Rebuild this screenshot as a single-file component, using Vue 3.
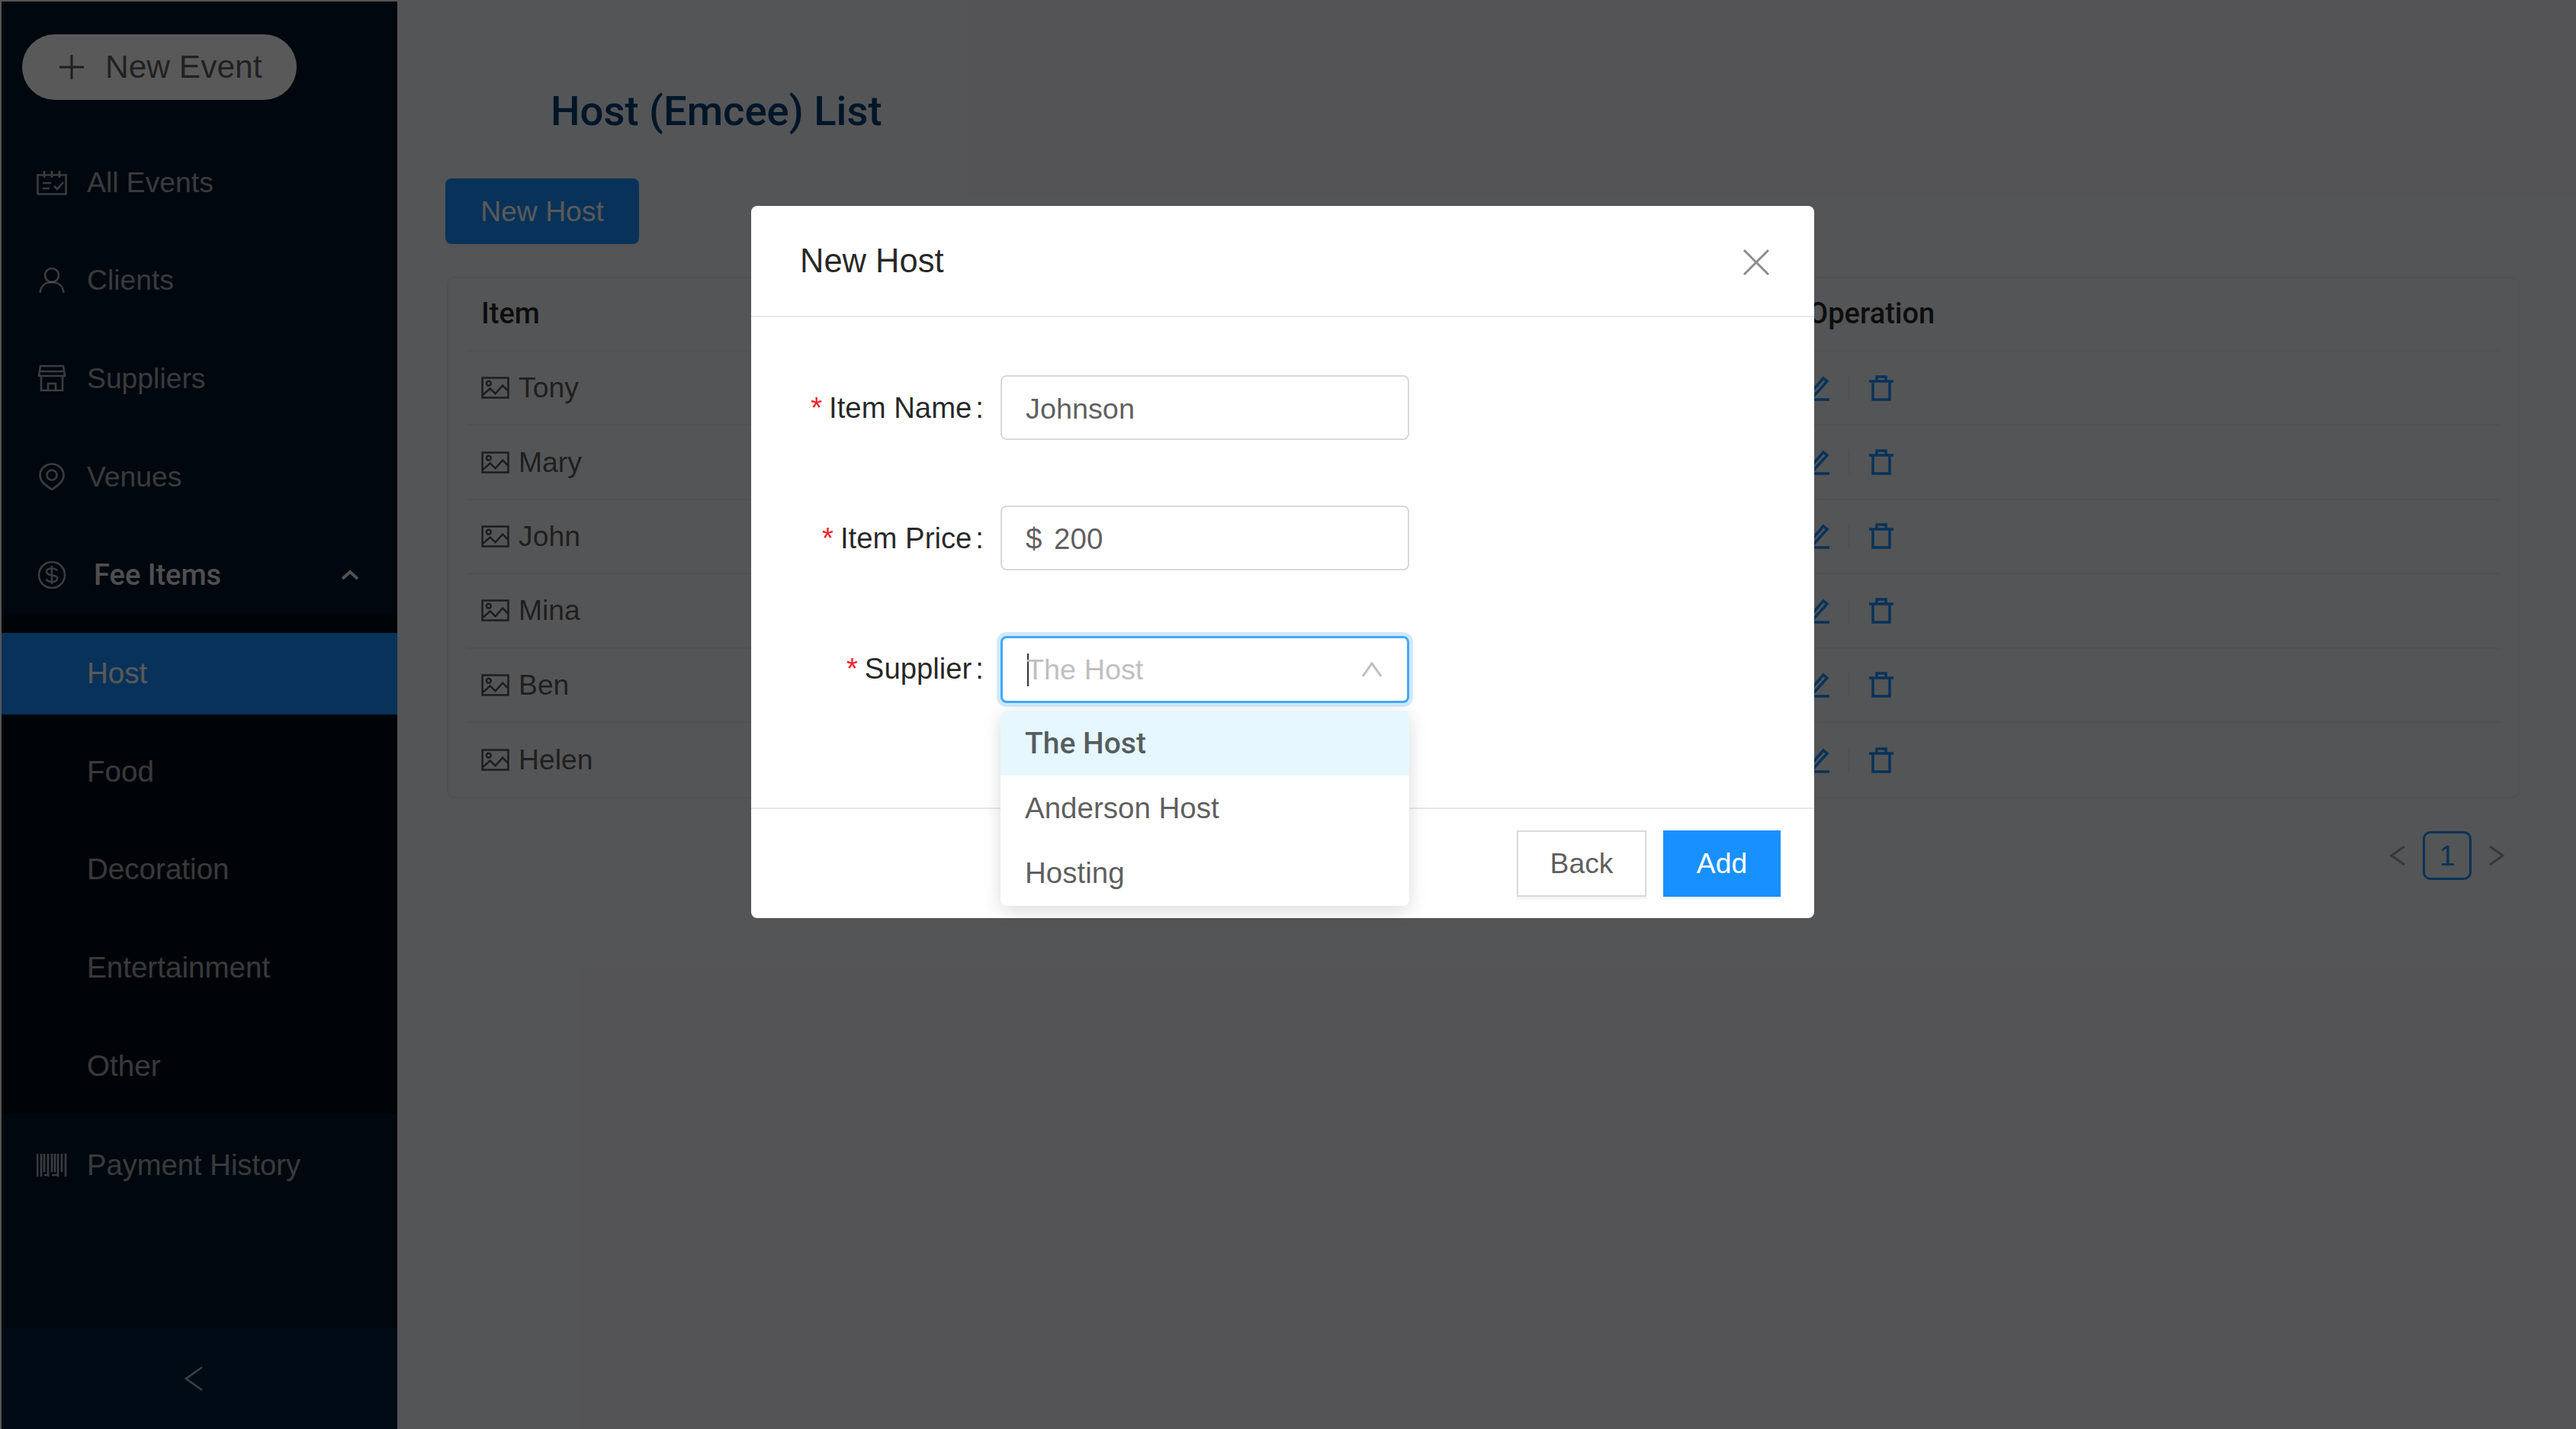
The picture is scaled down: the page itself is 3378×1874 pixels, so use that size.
<script setup>
const navTop = [
  { label: 'All Events', icon: 'calendar' },
  { label: 'Clients', icon: 'user' },
  { label: 'Suppliers', icon: 'store' },
  { label: 'Venues', icon: 'pin' }
]
const subItems = ['Host', 'Food', 'Decoration', 'Entertainment', 'Other']
const hosts = ['Tony', 'Mary', 'John', 'Mina', 'Ben', 'Helen']
const suppliers = ['The Host', 'Anderson Host', 'Hosting']
</script>

<template>
  <div class="page">
    <aside class="sider">
      <button class="new-event" type="button">
        <svg class="plus" viewBox="0 0 34 34"><path d="M17 1v32M1 17h32" /></svg>
        <span>New Event</span>
      </button>

      <nav class="menu">
        <a v-for="item in navTop" :key="item.label" class="menu-item">
          <svg class="menu-icon" viewBox="0 0 40 36">
            <template v-if="item.icon === 'calendar'">
              <path d="M1.500 8.500h37v25h-37zM10 3v9M20 3v9M30 3v9M8 19h11M8 26h9M23 23l4 4 8-9" />
            </template>
            <template v-else-if="item.icon === 'user'">
              <circle cx="20" cy="11" r="9" />
              <path d="M4.500 34c1-9 7-14 15.500-14s14.500 5 15.500 14" />
            </template>
            <template v-else-if="item.icon === 'store'">
              <path d="M5 2h30l2 13H3zM3 9h34M6 15v19h28V15M15 34v-9h10v9" />
            </template>
            <template v-else>
              <circle cx="20" cy="16" r="6.500" />
              <path d="M20 35C11 29 4.500 24 4.500 16a15.500 14.500 0 0 1 31 0c0 8-6.500 13-15.500 19z" />
            </template>
          </svg>
          <span>{{ item.label }}</span>
        </a>

        <a class="menu-item fee">
          <svg class="menu-icon" viewBox="0 0 40 36">
            <circle cx="20" cy="18" r="17" />
            <path d="M27 12.500c-1-2-3.500-3-7-3-4 0-7 1.500-7 4.500 0 6 14 2.500 14 8.500 0 3-3 4.500-7 4.500-3.500 0-6-1-7.500-3.500M20 6v24" />
          </svg>
          <span class="fee-label">Fee Items</span>
          <svg class="caret" viewBox="0 0 22 12"><path d="M1 11l10-9 10 9" /></svg>
        </a>
        <div class="submenu">
          <a
            v-for="(sub, i) in subItems"
            :key="sub"
            class="sub-item"
            :class="{ active: i === 0 }"
          >{{ sub }}</a>
        </div>

        <a class="menu-item pay">
          <svg class="menu-icon" viewBox="0 0 40 32">
            <path d="M1 1v30M6 1v30M10 1v24M15 1v30M20 1v24M24 1v24M28 1v30M33 1v24M38 1v30M10 29h5M20 29h8" />
          </svg>
          <span>Payment History</span>
        </a>
      </nav>

      <div class="collapse">
        <svg viewBox="0 0 24 34"><path d="M23 2L2 17l21 15" /></svg>
      </div>
    </aside>

    <main class="content">
      <h1 class="title">Host (Emcee) List</h1>
      <button class="new-host" type="button">New Host</button>

      <section class="table">
        <div class="row head">
          <div class="cell-item">Item</div>
          <div class="cell-op">Operation</div>
        </div>
        <div v-for="name in hosts" :key="name" class="row">
          <div class="cell-item">
            <svg class="pic" viewBox="0 0 38 30">
              <path d="M1.500 1.500h35v27h-35zM2 25l10-9 7 7 10-11 8 8" />
              <circle cx="10" cy="9" r="3" />
            </svg>
            <span>{{ name }}</span>
          </div>
          <div class="cell-op ops">
            <svg class="edit" viewBox="0 0 32 34"><path d="M5 26L24 4l5 4-19 21-6 1zM0 32h32" /></svg>
            <i class="split"></i>
            <svg class="trash" viewBox="0 0 34 34"><path d="M1 8h32M6 8v24h22V8M11 8V2h12v6" /></svg>
          </div>
        </div>
      </section>

      <div class="pager">
        <svg class="page-arrow" viewBox="0 0 22 28"><path d="M20 2L3 14l17 12" /></svg>
        <span class="page-num">1</span>
        <svg class="page-arrow" viewBox="0 0 22 28"><path d="M2 2l17 12L2 26" /></svg>
      </div>
    </main>

    <div class="mask">
      <div class="modal">
        <header class="modal-head">
          <span>New Host</span>
          <svg class="close" viewBox="0 0 34 34"><path d="M1 1l32 32M33 1L1 33" /></svg>
        </header>

        <div class="modal-body">
          <div class="field">
            <label><em>*</em>Item Name<span class="colon">:</span></label>
            <div class="input">Johnson</div>
          </div>
          <div class="field">
            <label><em>*</em>Item Price<span class="colon">:</span></label>
            <div class="input price">$ 200</div>
          </div>
          <div class="field">
            <label><em>*</em>Supplier<span class="colon">:</span></label>
            <div class="select-wrap">
              <div class="input focused">
                <i class="text-caret"></i>
                <span class="placeholder">The Host</span>
                <svg class="arrow" viewBox="0 0 26 20"><path d="M1 19L13 2l12 17" /></svg>
              </div>
              <ul class="dropdown">
                <li
                  v-for="(s, i) in suppliers"
                  :key="s"
                  :class="{ selected: i === 0 }"
                >{{ s }}</li>
              </ul>
            </div>
          </div>
        </div>

        <footer class="modal-foot">
          <button class="btn" type="button">Back</button>
          <button class="btn primary" type="button">Add</button>
        </footer>
      </div>
    </div>
  </div>
</template>

<style>
html,
body {
  margin: 0;
  background: #f0f2f5;
}
</style>

<style scoped>
.page {
  position: relative;
  display: flex;
  height: 1874px;
  overflow: hidden;
  background: #f0f2f5;
  font-family: "Liberation Sans", Arial, sans-serif;
  font-size: 37.300px;
  color: rgba(0, 0, 0, 0.65);
}

/* sidebar */
.sider {
  display: flex;
  flex-direction: column;
  flex: none;
  width: 519px;
  margin: 2px 0 0 2px;
  background: #001529;
  color: rgba(255, 255, 255, 0.65);
}

.new-event {
  display: flex;
  align-items: center;
  gap: 27px;
  width: 360px;
  height: 86px;
  margin: 43px 0 0 27px;
  padding: 0 0 0 48px;
  border: none;
  border-radius: 43px;
  background: #fff;
  color: rgba(0, 0, 0, 0.65);
  font-family: inherit;
  font-size: 42.500px;
}

.plus {
  width: 34px;
  height: 34px;
  fill: none;
  stroke: rgba(0, 0, 0, 0.65);
  stroke-width: 3;
}

.menu {
  display: flex;
  flex-direction: column;
  margin-top: 55px;
}

.menu-item {
  display: flex;
  align-items: center;
  height: 106.600px;
  margin-bottom: 22px;
  padding-left: 46px;
}

.menu-icon {
  flex: none;
  width: 40px;
  height: 36px;
  margin-right: 26px;
  fill: none;
  stroke: currentColor;
  stroke-width: 2.600;
}

.fee {
  margin-bottom: 0;
  color: rgba(255, 255, 255, 0.9);
}

.fee .menu-icon {
  margin-right: 35px;
  color: rgba(255, 255, 255, 0.65);
}

.fee-label {
  font-family: Roboto, "Liberation Sans", sans-serif;
  font-size: 38px;
  font-weight: 500;
}

.caret {
  width: 22px;
  height: 12px;
  margin-left: auto;
  margin-right: 51px;
  fill: none;
  stroke: currentColor;
  stroke-width: 4;
}

.submenu {
  display: flex;
  flex-direction: column;
  gap: 22px;
  padding: 23px 0 10px;
  margin-bottom: 14px;
  background: #000c17;
  font-size: 38.600px;
}

.sub-item {
  display: flex;
  align-items: center;
  height: 106.600px;
  padding-left: 112px;
}

.sub-item.active {
  background: #1890ff;
  color: #fff;
}

.pay {
  margin-bottom: 0;
  font-size: 38.200px;
}

.collapse {
  display: flex;
  align-items: center;
  justify-content: center;
  height: 132px;
  margin-top: auto;
  padding-right: 16px;
  background: #002140;
}

.collapse svg {
  width: 24px;
  height: 34px;
  fill: none;
  stroke: rgba(255, 255, 255, 0.65);
  stroke-width: 2.600;
}

/* content */
.content {
  flex: 1;
  min-width: 0;
  padding: 0 74px 0 63px;
}

.title {
  margin: 113px 0 0 138px;
  font-family: Roboto, "Liberation Sans", sans-serif;
  font-size: 54.400px;
  font-weight: 500;
  line-height: 66px;
  color: #003f73;
}

.new-host {
  display: block;
  width: 254px;
  height: 86px;
  margin: 55px 0 0;
  border: none;
  border-radius: 8px;
  background: #1890ff;
  color: #fff;
  font-family: inherit;
  font-size: 37.300px;
}

.table {
  margin: 43px 0 0 2px;
  padding: 0 24px;
  border: 2px solid #e8e8e8;
  border-radius: 10px;
}

.row {
  display: grid;
  grid-template-columns: 1758px 1fr;
  align-items: center;
  height: 97.400px;
  box-sizing: border-box;
  border-bottom: 2px solid #e8e8e8;
}

.row:last-child {
  border-bottom: none;
}

.head {
  height: 96px;
  padding-bottom: 3px;
  font-family: Roboto, "Liberation Sans", sans-serif;
  font-size: 38px;
  font-weight: 500;
  color: rgba(0, 0, 0, 0.85);
}

.cell-item {
  display: flex;
  align-items: center;
  gap: 12px;
  padding-left: 19px;
}

.pic {
  width: 37px;
  height: 29px;
  fill: none;
  stroke: rgba(0, 0, 0, 0.65);
  stroke-width: 2.600;
}

.cell-op {
  margin-left: 1px;
}

.ops {
  display: flex;
  align-items: center;
  margin-left: -3px;
  color: #1890ff;
}

.ops svg {
  fill: none;
  stroke: currentColor;
  stroke-width: 3.500;
}

.edit {
  width: 32px;
  height: 34px;
}

.split {
  width: 2px;
  height: 32px;
  margin: 0 25px 0 24px;
  background: #e8e8e8;
}

.trash {
  width: 34px;
  height: 34px;
}

.pager {
  display: flex;
  align-items: center;
  justify-content: flex-end;
  gap: 22px;
  margin-top: 43px;
  padding-right: 19px;
}

.page-arrow {
  width: 22px;
  height: 28px;
  fill: none;
  stroke: rgba(0, 0, 0, 0.35);
  stroke-width: 3;
}

.page-num {
  display: flex;
  align-items: center;
  justify-content: center;
  width: 64px;
  height: 64px;
  box-sizing: border-box;
  border: 3px solid #1890ff;
  border-radius: 10px;
  color: #1890ff;
}

/* modal */
.mask {
  position: absolute;
  inset: 0;
  background: rgba(0, 0, 0, 0.65);
}

.modal {
  position: absolute;
  top: 270px;
  left: 985px;
  width: 1394px;
  height: 934px;
  display: flex;
  flex-direction: column;
  border-radius: 8px;
  background: #fff;
  color: rgba(0, 0, 0, 0.65);
}

.modal-head {
  display: flex;
  align-items: center;
  justify-content: space-between;
  flex: none;
  height: 144px;
  padding: 0 59px 0 64px;
  border-bottom: 2px solid #e8e8e8;
  font-size: 43.500px;
  color: rgba(0, 0, 0, 0.85);
}

.close {
  width: 34px;
  height: 34px;
  margin-top: 3px;
  fill: none;
  stroke: rgba(0, 0, 0, 0.45);
  stroke-width: 3;
}

.modal-body {
  flex: 1;
  display: flex;
  flex-direction: column;
  gap: 86px;
  padding-top: 76px;
}

.field {
  display: flex;
  align-items: center;
  height: 85px;
}

.field label {
  flex: none;
  width: 305px;
  font-size: 38.300px;
  text-align: right;
  color: rgba(0, 0, 0, 0.85);
}

.field em {
  margin-right: 9px;
  font-style: normal;
  color: #f5222d;
}

.colon {
  margin-left: 5px;
}

.input {
  display: flex;
  align-items: center;
  width: 536px;
  height: 85px;
  margin-left: 22px;
  padding: 3px 31px 0;
  box-sizing: border-box;
  border: 2px solid #d9d9d9;
  border-radius: 8px;
  background: #fff;
  font-size: 37.800px;
}

.price {
  font-size: 38.500px;
  word-spacing: 5px;
}

.select-wrap {
  position: relative;
  margin-top: 3px;
}

.focused {
  height: 88px;
  padding-top: 0;
  border: 3px solid #40a9ff;
  box-shadow: 0 0 0 5px rgba(24, 144, 255, 0.2);
}

.text-caret {
  width: 2px;
  height: 43px;
  margin-left: 1px;
  margin-right: -3px;
  background: #333;
}

.placeholder {
  color: #bfbfbf;
}

.arrow {
  width: 26px;
  height: 20px;
  margin-left: auto;
  margin-right: 2px;
  fill: none;
  stroke: #bfbfbf;
  stroke-width: 3;
}

.dropdown {
  position: absolute;
  top: 98px;
  left: 22px;
  width: 536px;
  margin: 0;
  padding: 0;
  list-style: none;
  overflow: hidden;
  border-radius: 8px;
  background: #fff;
  box-shadow: 0 6px 24px rgba(0, 0, 0, 0.15);
  font-size: 38.500px;
}

.dropdown li {
  display: flex;
  align-items: center;
  height: 85.300px;
  padding-left: 32px;
}

.dropdown .selected {
  background: #e6f7ff;
  font-family: Roboto, "Liberation Sans", sans-serif;
  font-size: 39px;
  font-weight: 500;
}

.modal-foot {
  display: flex;
  justify-content: flex-end;
  align-items: center;
  gap: 22px;
  flex: none;
  height: 143px;
  padding-right: 44px;
  border-top: 2px solid #e8e8e8;
}

.btn {
  width: 170px;
  height: 87px;
  border: 2px solid #d9d9d9;
  background: #fff;
  color: rgba(0, 0, 0, 0.65);
  font-family: inherit;
  font-size: 37.300px;
  box-shadow: 0 3px 2px rgba(0, 0, 0, 0.05);
}

.btn.primary {
  width: 154px;
  border-color: #1890ff;
  background: #1890ff;
  color: #fff;
}
</style>
